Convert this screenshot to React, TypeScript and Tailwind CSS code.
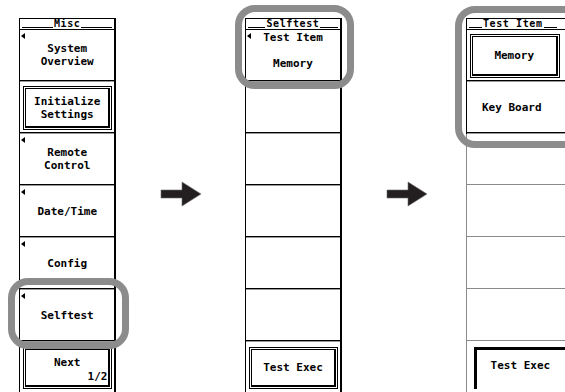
import type { ReactNode } from 'react';

const Marker = () => (
  <span className="absolute left-[1px] top-[3px] w-0 h-0 border-y-[3px] border-y-transparent border-r-[4px] border-r-black" />
);

function Header({ title, open }: { title: string; open?: boolean }) {
  return (
    <div
      className={
        open
          ? 'h-[12px] border-t border-b border-l border-black flex items-end px-[2px] pb-[1px] pr-[8px]'
          : 'h-[12px] border-t border-b border-l border-r-2 border-black flex items-end px-[2px] pb-[1px]'
      }
    >
      <div className="flex-1 border-b border-black" />
      <span className="text-[10px] leading-[8px] tracking-[0.6px] px-[1px]">{title}</span>
      <div className="flex-1 border-b border-black" />
    </div>
  );
}

function Sep({ dim }: { dim?: boolean }) {
  return (
    <>
      <div className={dim ? 'h-px bg-[#8a8a8a]' : 'h-px bg-black'} />
      <div className={dim ? 'h-px bg-white' : 'h-px bg-[#9a9a9a]'} />
    </>
  );
}

function Soft({
  children,
  marker,
  dim,
  open,
}: {
  children?: ReactNode;
  marker?: boolean;
  dim?: boolean;
  open?: boolean;
}) {
  let cls = 'relative h-[52px] flex flex-col border-l border-r-2 border-black';
  if (dim) cls = 'relative h-[52px] flex flex-col border-l border-[#8a8a8a]';
  if (open) cls = 'relative h-[52px] flex flex-col border-l border-black';
  return (
    <div className={cls}>
      {marker && <Marker />}
      <div
        className={
          open
            ? 'flex-1 flex flex-col items-center justify-center text-center pr-[8px]'
            : 'flex-1 flex flex-col items-center justify-center text-center'
        }
      >
        {children}
      </div>
      <Sep dim={dim} />
    </div>
  );
}

function Box({ children }: { children?: ReactNode }) {
  return (
    <div className="h-full border border-black p-px">
      <div className="h-full border-t border-l border-b-2 border-r-2 border-black flex flex-col items-center justify-center text-center">
        {children}
      </div>
    </div>
  );
}

function Raised({ children, open }: { children?: ReactNode; open?: boolean }) {
  return (
    <div
      className={
        open
          ? 'h-[52px] flex flex-col border-l border-black'
          : 'h-[52px] flex flex-col border-l border-r-2 border-black'
      }
    >
      <div
        className={
          open
            ? 'flex-1 pt-[4px] pb-[2px] pl-[3px] pr-[5px]'
            : 'flex-1 pt-[4px] pb-[2px] pl-[3px] pr-[2px]'
        }
      >
        <Box>{children}</Box>
      </div>
      <Sep />
    </div>
  );
}

function Bottom({ children, dim }: { children?: ReactNode; dim?: boolean }) {
  return (
    <div
      className={
        dim
          ? 'flex-1 border-l border-[#8a8a8a] pt-[5px] pb-[3px] pl-[7px]'
          : 'flex-1 border-l border-r-2 border-black pt-[5px] pb-[3px] pl-[3px] pr-[2px]'
      }
    >
      {children}
    </div>
  );
}

function Arrow() {
  return (
    <svg width="42" height="26" viewBox="0 0 42 26">
      <path d="M1 9 H22 V1 L41 13 L22 25 V17 H1 Z" fill="#231f20" stroke="#6b6b6b" strokeWidth="0.6" />
    </svg>
  );
}

export default function App() {
  return (
    <div className="relative w-[565px] h-[392px] overflow-hidden bg-white text-black font-['DejaVu_Sans_Mono',monospace] text-[11px] leading-[13px] font-bold">
      <div className="flex h-full pt-[18px] pl-[19px]">
        {/* Misc */}
        <div className="w-[98px] flex flex-col">
          <Header title="Misc" />
          <Soft marker>
            <span>System</span>
            <span>Overview</span>
          </Soft>
          <Raised>
            <span>Initialize</span>
            <span>Settings</span>
          </Raised>
          <Soft marker>
            <span>Remote</span>
            <span>Control</span>
          </Soft>
          <Soft marker>
            <span>Date/Time</span>
          </Soft>
          <Soft marker>
            <span>Config</span>
          </Soft>
          <Soft marker>
            <span>Selftest</span>
          </Soft>
          <Bottom>
            <Box>
              <div className="w-full h-full relative">
                <span className="absolute left-0 right-0 top-[6px]">Next</span>
                <span className="absolute right-[1px] bottom-[2px]">1/2</span>
              </div>
            </Box>
          </Bottom>
        </div>

        <div className="w-[129px] flex items-start justify-center pt-[163px]">
          <Arrow />
        </div>

        {/* Selftest */}
        <div className="w-[98px] flex flex-col">
          <Header title="Selftest" />
          <div className="relative h-[52px] flex flex-col border-l border-r-2 border-black">
            <Marker />
            <div className="flex-1 flex flex-col items-center pt-[1px]">
              <span>Test Item</span>
              <span className="mt-[13px]">Memory</span>
            </div>
            <Sep />
          </div>
          <Soft />
          <Soft />
          <Soft />
          <Soft />
          <Soft />
          <Bottom>
            <Box>
              <span>Test Exec</span>
            </Box>
          </Bottom>
        </div>

        <div className="w-[124px] flex items-start justify-center pt-[163px] pl-[6px]">
          <Arrow />
        </div>

        {/* Test Item */}
        <div className="w-[100px] flex flex-col">
          <Header title="Test Item" open />
          <Raised open>
            <span>Memory</span>
          </Raised>
          <Soft open>
            <span>Key Board</span>
          </Soft>
          <Soft dim />
          <Soft dim />
          <Soft dim />
          <Soft dim />
          <Bottom dim>
            <div className="h-full border-t-[3px] border-l-[3px] border-black pl-[14px] pt-[9px]">
              <span>Test Exec</span>
            </div>
          </Bottom>
        </div>
      </div>

      {/* highlight rings */}
      <div className="absolute left-[8px] top-[278px] w-[121px] h-[71px] border-[7px] border-[#8c8c8c] rounded-[20px]" />
      <div className="absolute left-[235px] top-[5px] w-[119px] h-[84px] border-[7px] border-[#8c8c8c] rounded-[20px]" />
      <div className="absolute left-[455px] top-[6px] w-[130px] h-[142px] border-[7px] border-[#8c8c8c] rounded-[20px]" />
    </div>
  );
}
